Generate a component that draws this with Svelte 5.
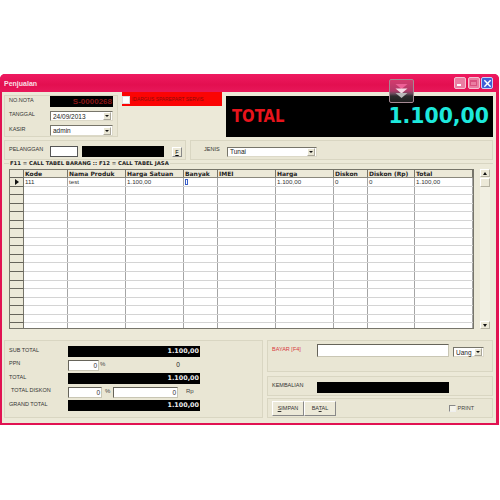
<script>
	const columns = [
		{ label: 'Kode', width: 44, value: '111' },
		{ label: 'Nama Produk', width: 58, value: 'test' },
		{ label: 'Harga Satuan', width: 58, value: '1.100,00' },
		{ label: 'Banyak', width: 34, value: '' },
		{ label: 'IMEI', width: 58, value: '' },
		{ label: 'Harga', width: 58, value: '1.100,00' },
		{ label: 'Diskon', width: 34, value: '0' },
		{ label: 'Diskon (Rp)', width: 47, value: '0' },
		{ label: 'Total', width: 58, value: '1.100,00' }
	];
	const rows = Array.from({ length: 18 }, (_, i) => i);
</script>

<div class="window">
	<div class="titlebar">
		<span class="title">Penjualan</span>
		<div class="controls">
			<span class="ctl"><i class="min"></i></span>
			<span class="ctl"><i class="max"></i></span>
			<span class="ctl close">
				<svg viewBox="0 0 10 10" width="9" height="9"><path d="M1.5 1.5l7 7M8.5 1.5l-7 7" stroke="#fff" stroke-width="1.6" /></svg>
			</span>
		</div>
	</div>

	<div class="drop">
		<svg viewBox="0 0 25 24" width="25" height="24">
			<defs>
				<linearGradient id="dropbg" x1="0" y1="0" x2="0" y2="1">
					<stop offset="0" stop-color="#d63a6e" />
					<stop offset="0.5" stop-color="#b03a68" />
					<stop offset="0.62" stop-color="#6a4a5c" />
					<stop offset="0.72" stop-color="#2c2c2c" />
					<stop offset="1" stop-color="#1c1c1c" />
				</linearGradient>
			</defs>
			<rect x="0.5" y="0.5" width="24" height="23" rx="1.5" fill="url(#dropbg)" stroke="#a58a94" />
			<path d="M6.5 5h12l-6 5z" fill="#ee5f96" />
			<path d="M6.5 9.5h12l-6 5z" fill="#f6dce6" />
			<path d="M6.5 14h12l-6 5z" fill="#b8b8b8" />
		</svg>
	</div>

	<div class="body">
		<div class="top">
			<div class="panel nota">
				<div class="field"><label>NO.NOTA</label><div class="black nota-no">S-0000268</div></div>
				<div class="field"><label>TANGGAL</label><div class="combo date"><span>24/09/2013</span><b class="arrow"></b></div></div>
				<div class="field"><label>KASIR</label><div class="combo date"><span>admin</span><b class="arrow"></b></div></div>
			</div>
			<div class="alert"><span class="check"></span><span>IDARGUS SPAREPART SERVIS</span></div>
			<div class="total-box">
				<span class="total-label">TOTAL</span>
				<span class="total-value">1.100,00</span>
			</div>
		</div>

		<div class="second">
			<div class="panel customer">
				<label>PELANGGAN</label>
				<div class="input small"></div>
				<div class="black name"></div>
				<button class="btn-e"><u>F</u></button>
			</div>
			<div class="panel kind">
				<label>JENIS</label>
				<div class="combo tunai"><span>Tunai</span><b class="arrow"></b></div>
			</div>
		</div>

		<fieldset class="group">
			<legend>F11 = CALL TABEL BARANG :: F12 = CALL TABEL JASA</legend>
			<div class="grid-area">
				<div class="grid">
					<div class="row head">
						<div class="marker"></div>
						{#each columns as col}
							<div class="cell" style="width:{col.width}px">{col.label}</div>
						{/each}
					</div>
					{#each rows as r}
						<div class="row">
							<div class="marker">
								{#if r === 0}<i class="pointer"></i>{/if}
							</div>
							{#each columns as col, c}
								<div class="cell" style="width:{col.width}px">
									{#if r === 0}{col.value}{#if c === 3}<i class="caret"></i>{/if}{/if}
								</div>
							{/each}
						</div>
					{/each}
				</div>
				<div class="scroll">
					<span class="sbtn"><b class="up"></b></span>
					<span class="thumb"></span>
					<span class="track"></span>
					<span class="sbtn"><b class="down"></b></span>
				</div>
			</div>
		</fieldset>

		<div class="bottom">
			<div class="panel totals">
				<div class="line"><label>SUB TOTAL</label><div class="black amount">1.100,00</div></div>
				<div class="line">
					<label>PPN</label>
					<div class="input pct">0</div><span class="unit">%</span>
					<span class="ppn-val">0</span>
				</div>
				<div class="line"><label>TOTAL</label><div class="black amount">1.100,00</div></div>
				<div class="line">
					<label class="indent">TOTAL DISKON</label>
					<div class="input pct wide">0</div><span class="unit wide">%</span>
					<div class="input disc">0</div><span class="unit rp">Rp</span>
				</div>
				<div class="line"><label>GRAND TOTAL</label><div class="black amount">1.100,00</div></div>
			</div>

			<div class="right">
				<div class="panel pay">
					<label class="red">BAYAR [F4]</label>
					<div class="input pay-in"></div>
					<div class="combo uang"><span>Uang</span><b class="arrow"></b></div>
				</div>
				<div class="panel change">
					<label>KEMBALIAN</label>
					<div class="black change-box"></div>
				</div>
				<div class="panel actions">
					<div class="buttons">
						<button><u>S</u>IMPAN</button>
						<button>BA<u>T</u>AL</button>
					</div>
					<div class="print"><span class="check flat"></span>PRINT</div>
				</div>
			</div>
		</div>
	</div>
</div>

<style>
	:global(body) {
		margin: 0;
		background: #fff;
	}

	.window {
		position: relative;
		box-sizing: border-box;
		width: 499px;
		height: 351px;
		margin-top: 74px;
		background: #e11252;
		border-radius: 5px 5px 0 0;
		padding: 0 3px 2px 2px;
		font-family: Tahoma, "Liberation Sans", Arial, sans-serif;
		font-size: 5.5px;
		color: #222;
		display: flex;
		flex-direction: column;
	}

	.titlebar {
		height: 18px;
		display: flex;
		align-items: center;
		justify-content: space-between;
		background: linear-gradient(#ee1a60, #e30f50 60%, #e8185a);
		flex: none;
		margin: 0 -3px 0 -2px;
		padding: 0 6px 0 4px;
		border-radius: 5px 5px 0 0;
	}

	.title {
		color: #fff;
		font-size: 7px;
		font-weight: 700;
		opacity: 0.85;
	}

	.controls {
		display: flex;
		gap: 1.5px;
		margin-right: 0;
	}

	.ctl {
		box-sizing: border-box;
		width: 12px;
		height: 12px;
		border: 1px solid #f4c2d2;
		border-radius: 2px;
		background: #ea7ea2;
		display: flex;
		align-items: center;
		justify-content: center;
		position: relative;
	}

	.ctl .min {
		position: absolute;
		left: 2px;
		bottom: 2px;
		width: 4px;
		height: 2px;
		background: #fff;
	}

	.ctl .max {
		width: 7px;
		height: 6px;
		border: 1px solid #d9507f;
		border-top-width: 2px;
		box-sizing: border-box;
	}

	.ctl.close {
		background: #3f5fd6;
		border-color: #c4d2f4;
	}

	.drop {
		position: absolute;
		left: 389px;
		top: 5px;
		width: 25px;
		height: 24px;
	}

	.drop svg {
		display: block;
	}

	.body {
		flex: 1;
		min-height: 0;
		background: #ece9d8;
		padding: 0 3px 0 2px;
		display: flex;
		flex-direction: column;
		box-sizing: border-box;
	}

	.panel {
		box-sizing: border-box;
		background: #e9e6d4;
		border: 1px solid #f6f4ea;
		outline: 1px solid #d9d6c2;
		outline-offset: -1px;
	}

	label {
		font-size: 5.5px;
		color: #333;
		white-space: nowrap;
	}

	.black {
		background: #000;
		box-sizing: border-box;
	}

	.input {
		box-sizing: border-box;
		background: #fff;
		border: 1px solid #66645a;
		border-right-color: #c9c6b4;
		border-bottom-color: #c9c6b4;
		text-align: right;
		color: #333;
		font-size: 6.5px;
		line-height: 9px;
		padding-right: 1px;
	}

	.combo {
		box-sizing: border-box;
		background: #fff;
		border: 1px solid #77756a;
		border-right-color: #dcd9c8;
		border-bottom-color: #dcd9c8;
		display: flex;
		align-items: center;
		justify-content: space-between;
		font-size: 6.5px;
		padding: 0 1px 0 2px;
		color: #222;
	}

	.arrow {
		width: 8px;
		height: 8px;
		background: #e9e6d4;
		border: 1px solid #aaa79a;
		border-left-color: #fff;
		border-top-color: #fff;
		box-sizing: border-box;
		position: relative;
		flex: none;
	}

	.arrow::after {
		content: '';
		position: absolute;
		left: 1px;
		top: 2px;
		border: 2px solid transparent;
		border-top: 2.5px solid #111;
		border-bottom: 0;
	}

	.top {
		height: 45px;
		display: flex;
		align-items: flex-start;
		flex: none;
	}

	.nota {
		width: 114px;
		height: 42px;
		margin-top: 3px;
		padding: 0 4px;
		display: flex;
		flex-direction: column;
		gap: 3.5px;
		flex: none;
	}

	.field {
		display: flex;
		align-items: center;
		justify-content: space-between;
		height: 11px;
		flex: none;
	}

	.field label {
		margin-bottom: 4px;
	}

	.nota-no {
		width: 63px;
		height: 11px;
		color: #8a1616;
		font-size: 8px;
		font-weight: 700;
		text-align: right;
		line-height: 11px;
		padding-right: 1px;
	}

	.date {
		width: 63px;
		height: 10.5px;
	}

	.alert {
		box-sizing: border-box;
		width: 100px;
		height: 14px;
		margin-left: 4px;
		background: #fb0404;
		display: flex;
		align-items: center;
		gap: 2px;
		font-size: 4.9px;
		color: #8a0c0c;
		white-space: nowrap;
		flex: none;
	}

	.check {
		width: 8px;
		height: 8px;
		background: #fff;
		flex: none;
		display: inline-block;
		box-sizing: border-box;
		border: 1px solid #ddd;
	}

	.alert .check {
		margin-top: 2px;
	}

	.total-box {
		flex: none;
		box-sizing: border-box;
		width: 267px;
		height: 41px;
		margin: 4px 0 0 4px;
		background: #000;
		display: flex;
		align-items: center;
		justify-content: space-between;
		padding: 0 4px 2px 6px;
	}

	.total-label {
		font-family: "DejaVu Sans", sans-serif;
		font-size: 14.8px;
		font-weight: 700;
		color: #e8141c;
		display: inline-block;
		transform: scaleY(1.18);
	}

	.total-value {
		font-family: "DejaVu Sans", sans-serif;
		font-size: 20.4px;
		font-weight: 700;
		color: #1de8dc;
	}

	.second {
		display: flex;
		gap: 4px;
		margin-top: 3px;
		height: 20px;
		flex: none;
	}

	.customer {
		width: 182px;
		display: flex;
		align-items: center;
		padding-left: 4px;
		padding-top: 3px;
	}

	.customer label {
		width: 41px;
		flex: none;
		margin-bottom: 5px;
	}

	.small {
		width: 28px;
		height: 11px;
		border-color: #555;
	}

	.name {
		width: 82px;
		height: 11px;
		margin-left: 4px;
	}

	.btn-e {
		box-sizing: border-box;
		width: 10px;
		height: 10px;
		margin-left: 8px;
		padding: 0;
		font: inherit;
		background: #ece9d8;
		border: 1px solid #888;
		border-left-color: #fff;
		border-top-color: #fff;
	}

	.kind {
		flex: 1;
		min-width: 0;
		display: flex;
		align-items: center;
		padding-left: 13px;
		padding-top: 3px;
	}

	.kind label {
		width: 23px;
		margin-bottom: 5px;
	}

	.tunai {
		width: 90px;
		height: 10px;
	}

	.group {
		margin: 0;
		padding: 0 0 0 5px;
		border: 0;
		border-top: 1px solid #d8d5c2;
		min-width: 0;
		flex: none;
	}

	legend {
		font-family: "DejaVu Sans", sans-serif;
		font-size: 5.3px;
		font-weight: 700;
		color: #222;
		padding: 0 1px;
		margin-left: 0;
		line-height: 7px;
	}

	.grid-area {
		display: flex;
		height: 160px;
		margin-top: 2px;
	}

	.grid {
		box-sizing: border-box;
		flex: none;
		width: 465px;
		height: 160px;
		overflow: hidden;
		background: #fff;
		border: 1px solid #77756a;
	}

	.row {
		display: flex;
		height: 8.55px;
		box-sizing: border-box;
		border-bottom: 1px solid #d4d4d4;
	}

	.row.head {
		height: 8px;
		background: #ece9d8;
		border-bottom: 1px solid #8a887c;
	}

	.marker {
		box-sizing: border-box;
		width: 14px;
		flex: none;
		background: #ece9d8;
		border-right: 1px solid #77756a;
		border-bottom: 1px solid #66645a;
		margin-bottom: -1px;
		position: relative;
	}

	.pointer {
		position: absolute;
		left: 5px;
		top: 1px;
		border-left: 4px solid #111;
		border-top: 3px solid transparent;
		border-bottom: 3px solid transparent;
	}

	.cell {
		box-sizing: border-box;
		flex: none;
		border-right: 1px solid #a5a5a5;
		padding-left: 1px;
		font-size: 6.2px;
		line-height: 7.5px;
		color: #333;
		white-space: nowrap;
		overflow: hidden;
	}

	.head .cell {
		font-family: "DejaVu Sans", sans-serif;
		font-weight: 700;
		font-size: 6px;
		color: #222;
		border-right-color: #77756a;
	}

	.caret {
		display: inline-block;
		width: 3px;
		height: 6px;
		margin-top: 1px;
		background: #fff;
		border: 1px solid #3a5fc8;
		box-sizing: border-box;
	}

	.scroll {
		margin-left: 6px;
		width: 10px;
		flex: none;
		background: #f1efe2;
		display: flex;
		flex-direction: column;
	}

	.sbtn,
	.thumb {
		box-sizing: border-box;
		height: 8px;
		background: #ece9d8;
		border: 1px solid #b5b2a2;
		border-left-color: #fff;
		border-top-color: #fff;
		display: flex;
		align-items: center;
		justify-content: center;
		flex: none;
	}

	.thumb {
		height: 9px;
		margin-top: 1px;
	}

	.track {
		flex: 1;
	}

	.up,
	.down {
		width: 0;
		height: 0;
		border-left: 2px solid transparent;
		border-right: 2px solid transparent;
	}

	.up {
		border-bottom: 3px solid #111;
	}

	.down {
		border-top: 3px solid #111;
	}

	.bottom {
		display: flex;
		gap: 4px;
		margin-top: 11px;
		height: 78px;
		flex: none;
	}

	.totals {
		width: 259px;
		flex: none;
		padding: 5px 4px 0;
		display: flex;
		flex-direction: column;
		gap: 2.5px;
	}

	.line {
		display: flex;
		align-items: center;
		height: 11px;
		flex: none;
	}

	.line label {
		width: 59px;
		flex: none;
		margin-bottom: 4px;
	}

	.indent {
		padding-left: 2px;
		box-sizing: border-box;
	}

	.amount {
		width: 132px;
		height: 11px;
		color: #eee;
		font-family: "DejaVu Sans", sans-serif;
		font-size: 6.4px;
		font-weight: 700;
		text-align: right;
		line-height: 11px;
		padding-right: 1px;
	}

	.pct {
		width: 31px;
		height: 11px;
	}

	.pct.wide {
		width: 34px;
	}

	.unit {
		margin-left: 1px;
		margin-bottom: 3px;
		font-size: 6px;
		color: #444;
	}

	.unit.wide {
		margin-left: 3px;
		width: 8px;
		flex: none;
	}

	.unit.rp {
		margin-left: 8px;
	}

	.ppn-val {
		margin-left: 71px;
		margin-bottom: 2px;
		font-size: 6.5px;
	}

	.disc {
		width: 65px;
		height: 11px;
	}

	.right {
		flex: 1;
		min-width: 0;
		display: flex;
		flex-direction: column;
	}

	.pay {
		height: 32px;
		display: flex;
		align-items: flex-start;
		padding: 3px 0 0 4px;
	}

	.pay label,
	.change label {
		width: 45px;
		flex: none;
	}

	.pay label {
		margin-top: 2px;
	}

	.red {
		color: #d8383c;
	}

	.pay-in {
		width: 132px;
		height: 13px;
	}

	.uang {
		width: 31px;
		height: 10px;
		margin-left: 4px;
		margin-top: 3px;
	}

	.change {
		height: 20px;
		margin-top: 4px;
		display: flex;
		align-items: center;
		padding: 2px 0 0 4px;
	}

	.change label {
		margin-bottom: 4px;
	}

	.change-box {
		width: 132px;
		height: 11px;
	}

	.actions {
		height: 20px;
		margin-top: 2px;
		display: flex;
		align-items: center;
		justify-content: space-between;
		padding: 0 18px 0 4px;
	}

	.buttons {
		display: flex;
	}

	.buttons button {
		box-sizing: border-box;
		width: 32px;
		height: 15px;
		padding: 0;
		font: inherit;
		color: #333;
		background: #ece9d8;
		border: 1px solid #888;
		border-left-color: #fff;
		border-top-color: #fff;
	}

	.print {
		display: flex;
		align-items: center;
		gap: 2px;
		color: #444;
	}

	.check.flat {
		width: 7px;
		height: 7px;
		border: 1px solid #888;
		border-right-color: #eee;
		border-bottom-color: #eee;
		background: #f4f3ea;
	}
</style>
